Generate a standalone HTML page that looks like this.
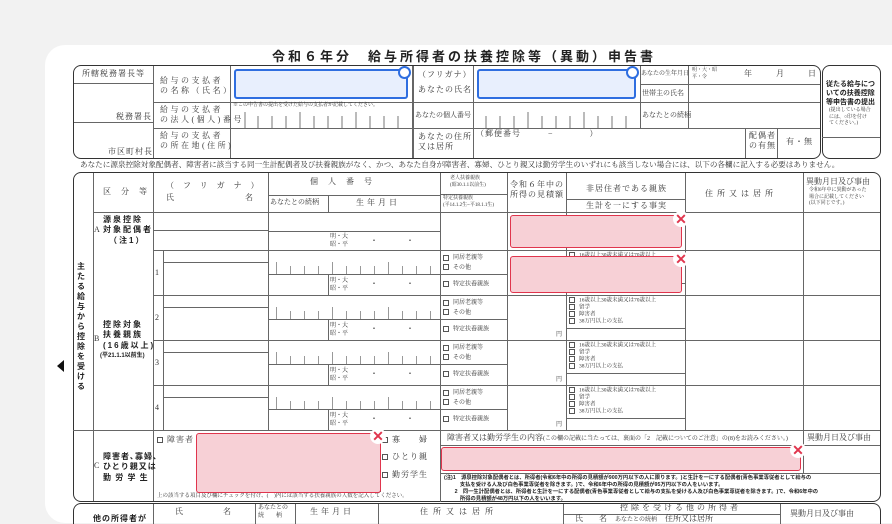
<!DOCTYPE html>
<html style="width:892px;height:524px;overflow:hidden"><head><meta charset="utf-8"><style>
*{margin:0;padding:0;box-sizing:border-box}
body{width:892px;height:524px;overflow:hidden;background:#f2f2f2;font-family:"Liberation Serif","Noto Serif CJK SC","Noto Sans CJK JP",serif;color:#333;position:relative}
.card{position:absolute;left:45px;top:45px;width:900px;height:478px;background:#fff;border-radius:20px}
.b{position:absolute;border:1.5px solid #333;border-radius:8px}
.h{position:absolute;height:1px;background:#666}
.v{position:absolute;width:1px;background:#666}
.t{position:absolute;font-size:8px;white-space:nowrap;line-height:1.3;letter-spacing:1px}
.s{font-size:6px;letter-spacing:0}
.g{font-family:"Liberation Sans","Noto Sans CJK JP",sans-serif;font-weight:bold;color:#222}
.blue{position:absolute;background:#e8effd;border:2px solid #2f6ee0;border-radius:3px}
.circ{position:absolute;width:13px;height:13px;border:2px solid #2f6ee0;border-radius:50%;background:#fff}
.pink{position:absolute;background:#f7d0d6;border:1.5px solid #e0354d;border-radius:3px}
.x{position:absolute;width:16px;height:16px;border-radius:50%;background:#fff;color:#e0354d;font:bold 14px/16px "Liberation Sans",sans-serif;text-align:center}
.cb{display:inline-block;width:6px;height:6px;border:1px solid #555;margin-right:4px;vertical-align:middle}
</style></head><body>
<div class="card"></div>
<div class="t g" style="left:272px;top:49px;font-size:13px;letter-spacing:3px">令和６年分　給与所得者の扶養控除等（異動）申告書</div>

<div class="b" style="left:73px;top:65px;width:748px;height:94px"></div>
<div class="b" style="left:822px;top:65px;width:59px;height:94px"></div>
<div class="v" style="left:153px;top:66px;height:92px"></div>
<div class="v" style="left:230px;top:66px;height:92px"></div>
<div class="v" style="left:412px;top:66px;height:92px;width:2px"></div>
<div class="v" style="left:473px;top:66px;height:92px"></div>
<div class="v" style="left:640px;top:66px;height:62px"></div>
<div class="v" style="left:688px;top:66px;height:62px"></div>
<div class="v" style="left:745px;top:128px;height:30px"></div>
<div class="v" style="left:777px;top:128px;height:30px"></div>
<div class="h" style="left:74px;top:83px;width:79px"></div>
<div class="h" style="left:74px;top:122px;width:79px"></div>
<div class="h" style="left:153px;top:102px;width:667px"></div>
<div class="h" style="left:153px;top:128px;width:667px"></div>
<div class="h" style="left:640px;top:84px;width:180px"></div>
<div class="h" style="left:822px;top:137px;width:58px"></div>
<div class="t" style="left:82px;top:69px">所轄税務署長等</div>
<div class="t" style="left:116px;top:112px">税務署長</div>
<div class="t" style="left:108px;top:147px">市区町村長</div>
<div class="t" style="left:160px;top:76px;letter-spacing:2.5px">給与の支払者<br>の名称（氏名）</div>
<div class="t" style="left:160px;top:105px;letter-spacing:2.5px">給与の支払者<br>の法人(個人)番号</div>
<div class="t" style="left:160px;top:131px;letter-spacing:2.5px">給与の支払者<br>の所在地(住所)</div>
<div class="t s" style="left:233px;top:103px;font-size:5px">※この申告書の提出を受けた給与の支払者が記載してください。</div>
<div class="t" style="left:418px;top:70px">（フリガナ）</div>
<div class="t" style="left:418px;top:85px">あなたの氏名</div>
<div class="t" style="left:415px;top:111px;font-size:7px;letter-spacing:0">あなたの個人番号</div>
<div class="t" style="left:418px;top:132px">あなたの住所<br>又は居所</div>
<div class="t" style="left:476px;top:129px">（郵便番号　　　−　　　　）</div>
<div class="t" style="left:641px;top:71px;font-size:6px;letter-spacing:0">あなたの生年月日</div>
<div class="t s" style="left:692px;top:68px;font-size:5px">明・大・昭<br>平・令</div>
<div class="t" style="left:744px;top:69px;letter-spacing:0">年　　　月　　　日</div>
<div class="t" style="left:642px;top:89px;font-size:7px;letter-spacing:0">世帯主の氏名</div>
<div class="t" style="left:642px;top:111px;font-size:7px;letter-spacing:0">あなたとの続柄</div>
<div class="t" style="left:749px;top:131px">配偶者<br>の有無</div>
<div class="t" style="left:786px;top:137px">有・無</div>
<div class="t g" style="left:826px;top:80px;font-size:7px;letter-spacing:0">従たる給与につ<br>いての扶養控除<br>等申告書の提出</div>
<div class="t s" style="left:829px;top:108px;font-size:5px">(提出している場合<br>には、○印を付け<br>てください。)</div>
<svg style="position:absolute;left:0;top:0" width="892" height="524"><g stroke="#777" stroke-width="1">
<path d="M245 112v16M258 116v12M272 116v12M286 116v12M300 112v16M314 116v12M328 116v12M342 116v12M356 112v16M370 116v12M384 116v12M398 116v12"/>
<path d="M486 116v12M500 116v12M514 116v12M528 112v16M542 116v12M556 116v12M570 116v12M584 112v16M598 116v12M612 116v12M626 116v12"/>
</g></svg>
<div class="blue" style="left:234px;top:69px;width:174px;height:30px"></div>
<div class="circ" style="left:398px;top:66px"></div>
<div class="blue" style="left:477px;top:69px;width:159px;height:30px"></div>
<div class="circ" style="left:626px;top:66px"></div>

<div class="t" style="left:80px;top:160px;letter-spacing:0;font-size:7.6px">あなたに源泉控除対象配偶者、障害者に該当する同一生計配偶者及び扶養親族がなく、かつ、あなた自身が障害者、寡婦、ひとり親又は勤労学生のいずれにも該当しない場合には、以下の各欄に記入する必要はありません。</div>

<div class="b" style="left:73px;top:172px;width:808px;height:330px"></div>
<div class="v" style="left:93px;top:173px;height:328px"></div>
<div class="v" style="left:153px;top:173px;height:328px"></div>
<div class="v" style="left:268px;top:173px;height:257px"></div>
<div class="v" style="left:440px;top:173px;height:257px"></div>
<div class="v" style="left:507px;top:173px;height:257px"></div>
<div class="v" style="left:566px;top:173px;height:257px"></div>
<div class="v" style="left:685px;top:173px;height:257px"></div>
<div class="v" style="left:803px;top:173px;height:300px"></div>
<div class="v" style="left:163px;top:250px;height:180px"></div>
<div class="v" style="left:328px;top:195px;height:17px"></div>
<div class="h" style="left:268px;top:195px;width:172px"></div>
<div class="h" style="left:440px;top:194px;width:67px"></div>
<div class="h" style="left:566px;top:199px;width:119px"></div>
<div class="h" style="left:93px;top:212px;width:787px"></div>
<div class="t" style="left:103px;top:187px;letter-spacing:4px">区 分 等</div>
<div class="t" style="left:166px;top:181px;letter-spacing:9px">（フリガナ）</div>
<div class="t" style="left:166px;top:193px">氏</div><div class="t" style="left:245px;top:193px">名</div>
<div class="t" style="left:310px;top:177px;letter-spacing:10px">個人番号</div>
<div class="t" style="left:270px;top:198px;font-size:7px;letter-spacing:0">あなたとの続柄</div>
<div class="t" style="left:356px;top:198px;letter-spacing:3px">生年月日</div>
<div class="t s" style="left:450px;top:176px;font-size:5px">老人扶養親族<br>(昭30.1.1以前生)</div>
<div class="t s" style="left:443px;top:196px;font-size:5px">特定扶養親族<br>(平14.1.2生~平18.1.1生)</div>
<div class="t" style="left:510px;top:180px">令和６年中の<br>所得の見積額</div>
<div class="t" style="left:586px;top:184px">非居住者である親族</div>
<div class="t" style="left:586px;top:201px">生計を一にする事実</div>
<div class="t" style="left:705px;top:189px;letter-spacing:4px">住所又は居所</div>
<div class="t" style="left:806px;top:177px;letter-spacing:0">異動月日及び事由</div>
<div class="t s" style="left:809px;top:188px;font-size:5px">令和6年中に異動があった<br>場合に記載してください<br>(以下同じです。)</div>
<div class="t g" style="left:77px;top:262px;width:12px;white-space:normal;font-size:8px;letter-spacing:0;line-height:1.25">主たる給与から控除を受ける</div>
<div class="h" style="left:153px;top:250px;width:727px"></div>
<div class="h" style="left:153px;top:230px;width:115px"></div>
<div class="h" style="left:268px;top:231px;width:172px"></div>
<div class="t g" style="left:103px;top:215px;letter-spacing:2px">源泉控除<br>対象配偶者<br>　（注1）</div>
<div class="t" style="left:94px;top:225px">A</div>
<div class="t s" style="left:330px;top:234px">明・大<br>昭・平</div>
<div class="t" style="left:370px;top:236px">・　　　・</div>
<div class="t g" style="left:103px;top:320px;letter-spacing:2px">控除対象<br>扶養親族<br>(16歳以上)</div>
<div class="t s g" style="left:100px;top:353px">(平21.1.1以前生)</div>
<div class="t" style="left:94px;top:334px">B</div>
<div id="brows"></div>
<div class="h" style="left:73px;top:430px;width:807px"></div>
<div class="v" style="left:380px;top:430px;height:62px"></div>
<div class="h" style="left:440px;top:445px;width:440px"></div>
<div class="h" style="left:803px;top:473px;width:77px"></div>
<div class="h" style="left:440px;top:473px;width:363px"></div>
<div class="v" style="left:440px;top:430px;height:72px"></div>
<div class="t g" style="left:103px;top:452px;letter-spacing:1px">障害者､寡婦､<br>ひとり親又は<br>勤 労 学 生</div>
<div class="t" style="left:94px;top:461px">C</div>
<div class="t" style="left:157px;top:435px"><span class="cb"></span>障害者</div>
<div class="t" style="left:382px;top:435px"><span class="cb"></span>寡　　婦</div>
<div class="t" style="left:382px;top:452px"><span class="cb"></span>ひとり親</div>
<div class="t" style="left:382px;top:470px"><span class="cb"></span>勤労学生</div>
<div class="t s" style="left:157px;top:493px;font-size:5.5px">上の該当する項目及び欄にチェックを付け、(　)内には該当する扶養親族の人数を記入してください。</div>
<div class="t" style="left:447px;top:433px;letter-spacing:0">障害者又は勤労学生の内容<span class="s">(この欄の記載に当たっては、裏面の「2　記載についてのご注意」の(8)をお読みください。)</span></div>
<div class="t" style="left:807px;top:433px;letter-spacing:0">異動月日及び事由</div>
<div class="t g" style="left:444px;top:475px;line-height:1.3;font-size:5.3px;letter-spacing:0">(注)1　源泉控除対象配偶者とは、所得者(令和6年中の所得の見積額が900万円以下の人に限ります。)と生計を一にする配偶者(青色事業専従者として給与の<br>　　　支払を受ける人及び白色事業専従者を除きます。)で、令和6年中の所得の見積額が95万円以下の人をいいます。<br>　　2　同一生計配偶者とは、所得者と生計を一にする配偶者(青色事業専従者として給与の支払を受ける人及び白色事業専従者を除きます。)で、令和6年中の<br>　　　所得の見積額が48万円以下の人をいいます。</div>
<div class="b" style="left:73px;top:503px;width:808px;height:30px"></div>
<div class="v" style="left:153px;top:504px;height:20px"></div>
<div class="v" style="left:255px;top:504px;height:20px"></div>
<div class="v" style="left:295px;top:504px;height:20px"></div>
<div class="v" style="left:378px;top:504px;height:20px"></div>
<div class="v" style="left:563px;top:504px;height:20px"></div>
<div class="v" style="left:780px;top:504px;height:20px"></div>
<div class="h" style="left:563px;top:514px;width:217px"></div>
<div class="t g" style="left:93px;top:514px">他の所得者が</div>
<div class="t" style="left:175px;top:507px;letter-spacing:0">氏　　　　　名</div>
<div class="t s" style="left:258px;top:505px">あなたとの<br>続　　柄</div>
<div class="t" style="left:310px;top:507px;letter-spacing:3px">生年月日</div>
<div class="t" style="left:420px;top:507px;letter-spacing:5px">住所又は居所</div>
<div class="t" style="left:620px;top:503px;letter-spacing:3px">控除を受ける他の所得者</div>
<div class="t" style="left:575px;top:514px;letter-spacing:0">氏　　名　<span class="s">あなたとの続柄</span>　住所又は居所</div>
<div class="t" style="left:790px;top:509px;letter-spacing:0">異動月日及び事由</div>
<div class="pink" style="left:510px;top:215px;width:172px;height:33px"></div><div class="x" style="left:673px;top:211px">✕</div>
<div class="pink" style="left:510px;top:256px;width:172px;height:37px"></div><div class="x" style="left:673px;top:251px">✕</div>
<div class="pink" style="left:196px;top:433px;width:185px;height:60px"></div><div class="x" style="left:370px;top:428px">✕</div>
<div class="pink" style="left:441px;top:447px;width:360px;height:24px"></div><div class="x" style="left:790px;top:442px">✕</div>
<div style="position:absolute;left:57px;top:360px;width:0;height:0;border-top:6px solid transparent;border-bottom:6px solid transparent;border-right:7px solid #111"></div>
<script>
var h='';
for(var i=0;i<4;i++){var y=250+i*45;
if(i>0)h+='<div class="h" style="left:153px;top:'+y+'px;width:727px"></div>';
h+='<div class="t" style="left:155px;top:'+(y+18)+'px">'+(i+1)+'</div>';
h+='<div class="h" style="left:163px;top:'+(y+12)+'px;width:105px"></div>';
h+='<div class="h" style="left:268px;top:'+(y+24)+'px;width:172px"></div>';
h+='<div class="v" style="left:328px;top:'+(y+24)+'px;height:21px"></div>';
h+='<div class="t s" style="left:330px;top:'+(y+28)+'px">明・大<br>昭・平</div><div class="t" style="left:370px;top:'+(y+29)+'px">・　　　・</div>';
var tk='';for(var k=0;k<12;k++){var x=276+k*14;tk+='<div class="v" style="left:'+x+'px;top:'+(y+(k%4==0?12:16))+'px;height:'+(k%4==0?12:8)+'px;background:#999"></div>';}h+=tk;
h+='<div class="h" style="left:440px;top:'+(y+24)+'px;width:67px"></div>';
h+='<div class="t s" style="left:443px;top:'+(y+4)+'px;line-height:1.6"><span class="cb"></span>同居老親等<br><span class="cb"></span>その他</div>';
h+='<div class="t s" style="left:443px;top:'+(y+31)+'px"><span class="cb"></span>特定扶養親族</div>';
h+='<div class="t s" style="left:556px;top:'+(y+37)+'px">円</div>';
h+='<div class="h" style="left:566px;top:'+(y+33)+'px;width:119px"></div>';
h+='<div class="t s" style="left:569px;top:'+(y+2)+'px;line-height:1.25;font-size:5.5px"><span class="cb"></span>16歳以上30歳未満又は70歳以上<br><span class="cb"></span>留学<br><span class="cb"></span>障害者<br><span class="cb"></span>38万円以上の支払</div>';
}
document.getElementById('brows').innerHTML=h;
</script>
</body></html>
